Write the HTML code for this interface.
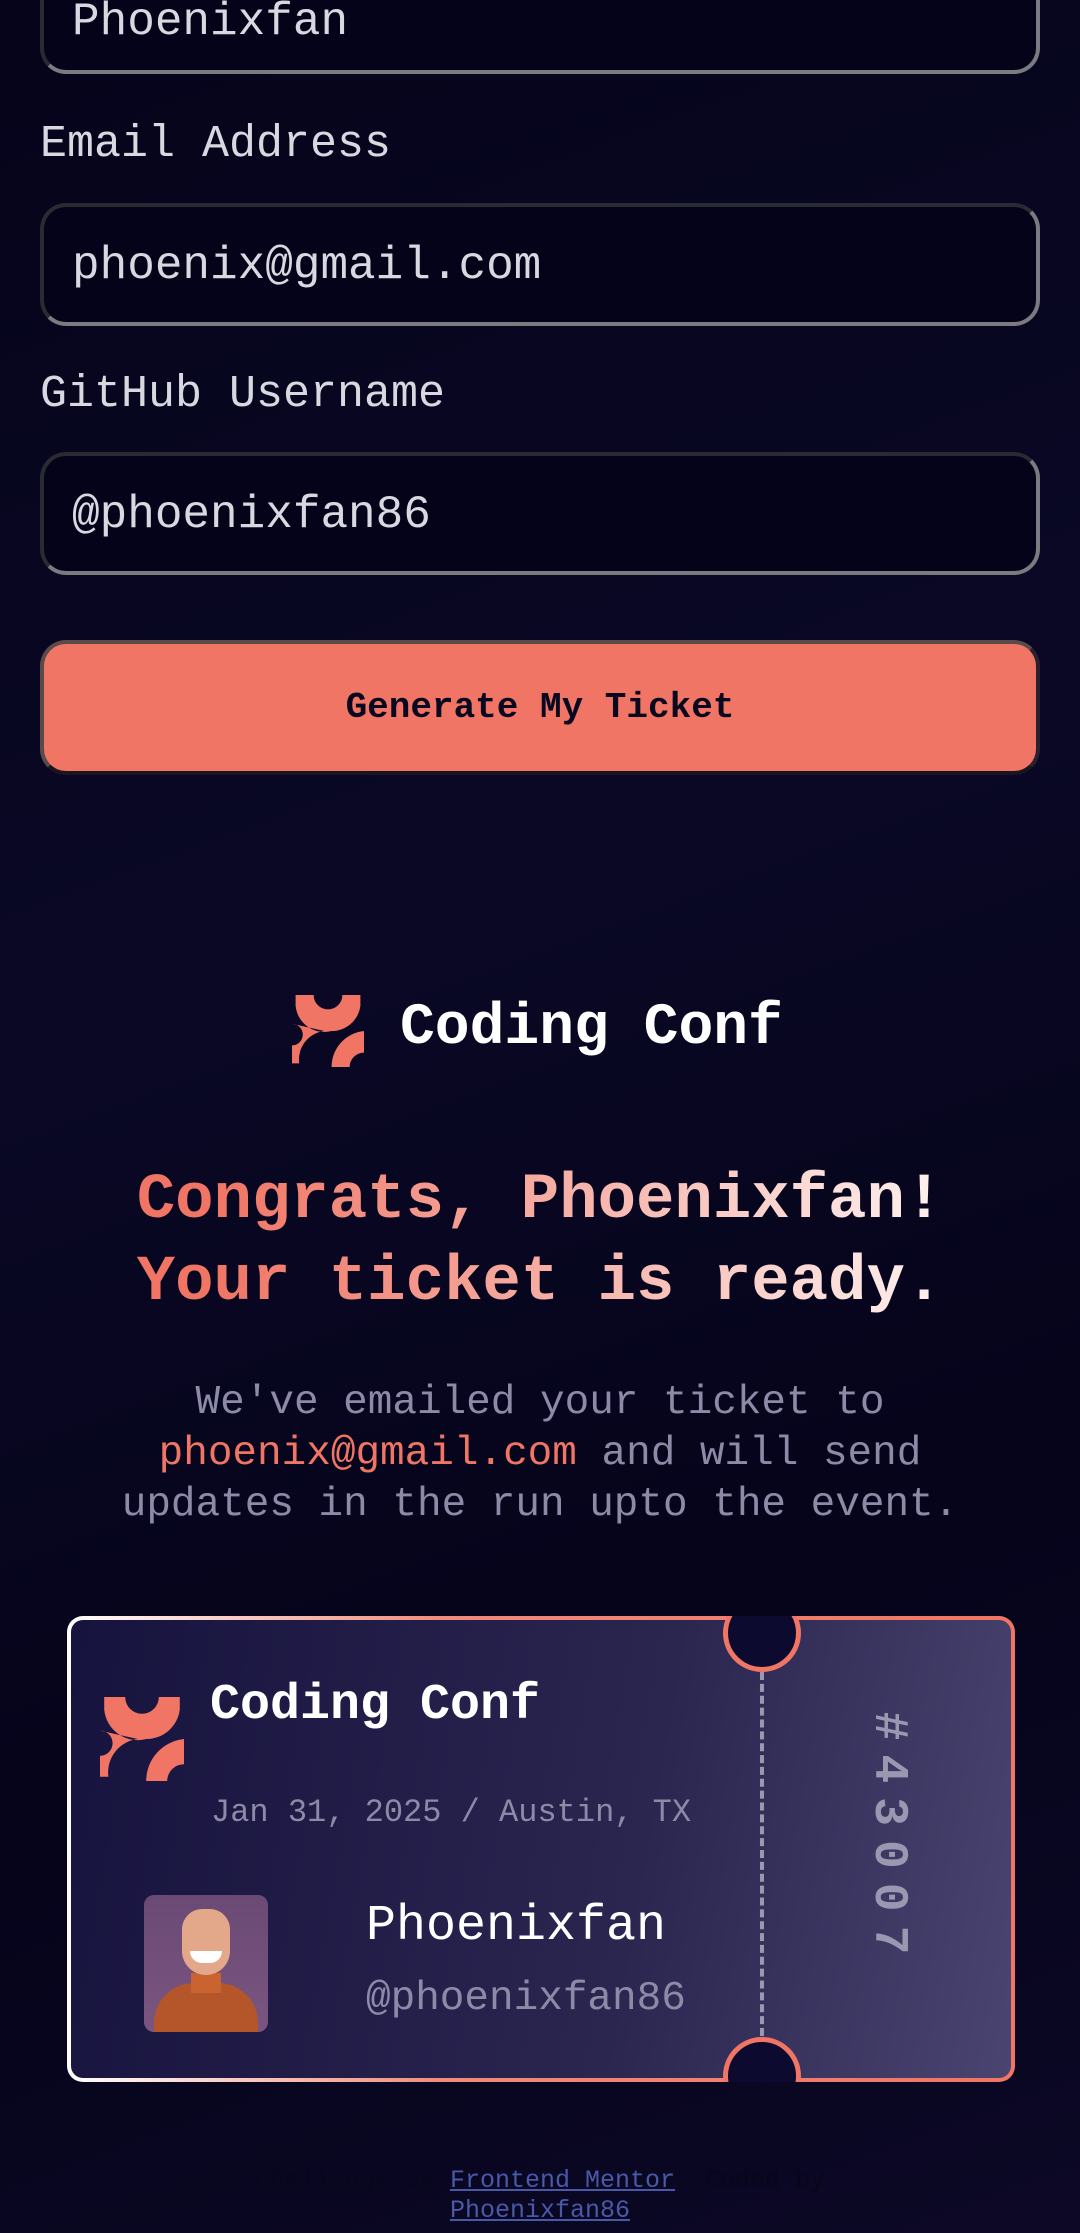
<!DOCTYPE html>
<html><head><meta charset="utf-8"><style>
*{margin:0;padding:0;box-sizing:border-box}
body{width:1080px;height:2233px;overflow:hidden;background:linear-gradient(160deg,#05041a 0%,#0a0825 40%,#05041a 70%,#0c0826 100%);font-family:"Liberation Mono",monospace;color:#fff;position:relative}
.a{position:absolute;white-space:nowrap}
.inp{position:absolute;left:40px;width:1000px;border:4px solid;border-color:#2a2a33 #7a7a80 #7a7a80 #2a2a33;border-radius:26px;background:#04031a}
.inp span{position:absolute;left:28px;font-size:46px;color:#d8d8e0;line-height:1}
.lbl{position:absolute;left:40px;font-size:45px;color:#d8d8e0;line-height:1}
.notch{position:absolute;left:656px;width:78px;height:78px;border-radius:50%;background:#0c0a2e;border:5px solid #f07564}
</style></head><body>
<div class="inp" style="top:-50px;height:124px"><span style="top:45px">Phoenixfan</span></div>
<div class="lbl" style="top:122px">Email Address</div>
<div class="inp" style="top:203px;height:123px"><span style="top:36px">phoenix@gmail.com</span></div>
<div class="lbl" style="top:372px">GitHub Username</div>
<div class="inp" style="top:452px;height:123px"><span style="top:36px">@phoenixfan86</span></div>
<div style="position:absolute;left:40px;top:640px;width:1000px;height:135px;border-radius:26px;background:#f07564;border:4px solid;border-color:#5a4a4a #2a2030 #1a1520 #5a4a4a;text-align:center;font-weight:bold;font-size:36px;line-height:127px;color:#0a0820">Generate My Ticket</div>

<svg class="a" style="left:292px;top:995px" width="72" height="72" viewBox="0 0 40 40"><path fill="#f07564" d="M2 0h10a8 8 0 0 0 16 0h10v6a16 16 0 0 1-16 14A16 16 0 0 1 2 6z M0 16a6 6 0 0 1 0 12v10h4a16 16 0 0 1 14-18z M22 40h10a8 8 0 0 1 8-8V20a20 20 0 0 0-18 20z"/></svg>
<div class="a" style="left:400px;top:994px;font-size:58px;font-weight:bold;line-height:70px">Coding Conf</div>

<div class="a" style="left:0;width:1080px;top:1160px;text-align:center;font-size:64px;line-height:82px;font-weight:bold;background:linear-gradient(90deg,#f07564 20%,#fff 95%);-webkit-background-clip:text;background-clip:text;color:transparent">Congrats, Phoenixfan!<br>Your ticket is ready.</div>

<div class="a" style="left:0;width:1080px;top:1378px;text-align:center;font-size:41px;line-height:51px;color:#8c8aa6">We've emailed your ticket to<br><span style="color:#f07564">phoenix@gmail.com</span> and will send<br>updates in the run upto the event.</div>

<div style="position:absolute;left:67px;top:1616px;width:948px;height:466px;border-radius:16px;padding:4px;background:linear-gradient(90deg,#fff,#f08a7a 40%,#f07564);overflow:hidden">
<div style="width:100%;height:100%;border-radius:12px;background:linear-gradient(100deg,#16133e 0%,#2b2650 60%,#4a4570 100%);position:relative"></div>
<div class="notch" style="top:-22px"></div>
<div class="notch" style="top:421px"></div>
<div style="position:absolute;left:693px;top:56px;height:364px;border-left:4px dashed #9a98b0"></div>
</div>

<svg class="a" style="left:100px;top:1696px" width="84" height="86" viewBox="0 0 40 40"><path fill="#f07564" d="M2 0h10a8 8 0 0 0 16 0h10v6a16 16 0 0 1-16 14A16 16 0 0 1 2 6z M0 16a6 6 0 0 1 0 12v10h4a16 16 0 0 1 14-18z M22 40h10a8 8 0 0 1 8-8V20a20 20 0 0 0-18 20z"/></svg>
<div class="a" style="left:210px;top:1676px;font-size:50px;font-weight:bold;line-height:60px">Coding Conf</div>
<div class="a" style="left:211px;top:1794px;font-size:32px;line-height:38px;color:#8c8aa6">Jan 31, 2025 / Austin, TX</div>

<div style="position:absolute;left:144px;top:1895px;width:124px;height:137px;border-radius:10px;background:linear-gradient(#6a4a75,#7a5580);overflow:hidden">
<div style="position:absolute;left:10px;top:88px;width:104px;height:70px;border-radius:40px 40px 0 0;background:#b5552a"></div>
<div style="position:absolute;left:47px;top:78px;width:30px;height:20px;background:#c9632f"></div>
<div style="position:absolute;left:38px;top:14px;width:48px;height:66px;border-radius:22px 22px 26px 26px;background:#e3a88a"></div>
<div style="position:absolute;left:46px;top:56px;width:32px;height:12px;border-radius:0 0 14px 14px;background:#fff"></div>
</div>
<div class="a" style="left:366px;top:1897px;font-size:50px;line-height:60px">Phoenixfan</div>
<div class="a" style="left:366px;top:1974px;font-size:41px;line-height:50px;color:#8c8aa6">@phoenixfan86</div>

<div class="a" style="left:888px;top:1840px;transform:translate(-50%,-50%) rotate(90deg);font-size:48px;font-weight:bold;letter-spacing:14px;color:#9a98b0">#43007</div>

<div class="a" style="left:0;width:1080px;top:2166px;text-align:center;font-size:25px;line-height:30px;color:#07061a">Challenge by <span style="color:#4a58a8;text-decoration:underline">Frontend Mentor</span>. Coded by<br><span style="color:#4a58a8;text-decoration:underline">Phoenixfan86</span></div>
</body></html>
